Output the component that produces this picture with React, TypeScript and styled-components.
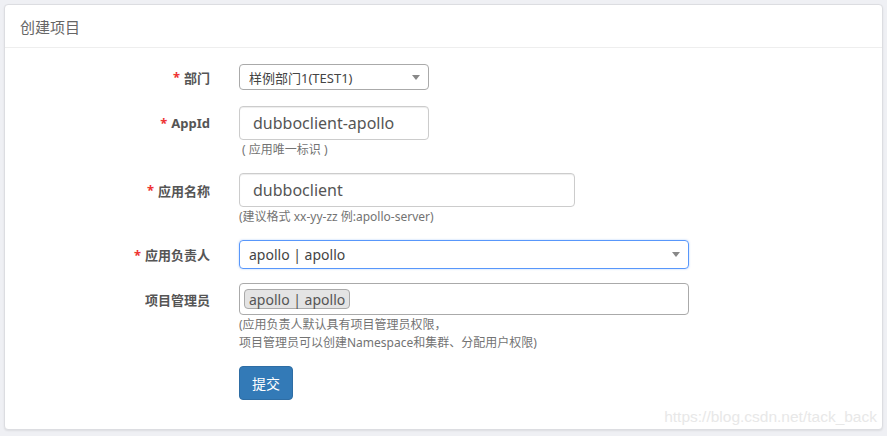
import React from "react";
import styled, { createGlobalStyle } from "styled-components";

const GlobalStyle = createGlobalStyle`
  html, body {
    margin: 0;
    padding: 0;
    background: #eff0f4;
  }
  body {
    font-family: "Noto Sans", "Noto Sans CJK SC", sans-serif;
    color: #333;
  }
`;

const Page = styled.div`
  width: 887px;
  height: 436px;
  padding: 4px 4px 0 4px;
  box-sizing: border-box;
`;

const Panel = styled.div`
  background: #fff;
  border: 1px solid #dcdde1;
  border-radius: 4px;
  box-shadow: 0 1px 2px rgba(0, 0, 0, 0.08);
  height: 426px;
  box-sizing: border-box;
  position: relative;
`;

const PanelHeader = styled.div`
  height: 42px;
  padding: 0 15px;
  display: flex;
  align-items: center;
  border-bottom: 1px solid #eeeeee;
  font-family: "Noto Sans CJK SC", sans-serif;
  font-size: 15px;
  color: #666;
`;

const Form = styled.div`
  padding: 16px 0 0 0;
  display: flex;
  flex-direction: column;
`;

const Row = styled.div<{ $mb: number }>`
  display: flex;
  align-items: flex-start;
  margin-bottom: ${(p) => p.$mb}px;
`;

const Label = styled.div<{ $h: number }>`
  width: 205px;
  height: ${(p) => p.$h}px;
  margin-right: 29px;
  display: flex;
  align-items: center;
  justify-content: flex-end;
  font-family: "Noto Sans", "Noto Sans CJK SC", sans-serif;
  font-weight: 700;
  font-size: 13px;
  color: #555;
`;

const Star = styled.span`
  color: #e33;
  margin-right: 4px;
  font-weight: 700;
`;

const Field = styled.div`
  display: flex;
  flex-direction: column;
`;

const Select = styled.div<{ $w: number; $h: number; $focus?: boolean; $size: number }>`
  width: ${(p) => p.$w}px;
  height: ${(p) => p.$h}px;
  box-sizing: border-box;
  border: 1px solid ${(p) => (p.$focus ? "#5897fb" : "#aaa")};
  border-radius: 4px;
  display: flex;
  align-items: center;
  padding: 0 8px 0 9px;
  font-size: ${(p) => p.$size}px;
  color: #444;
  font-family: "Noto Sans", "Noto Sans CJK SC", sans-serif;
  box-shadow: ${(p) => (p.$focus ? "0 0 2px rgba(88,151,251,0.5)" : "none")};
`;

const SelectText = styled.span`
  flex: 1;
`;

const Arrow = styled.span`
  width: 0;
  height: 0;
  border-left: 4px solid transparent;
  border-right: 4px solid transparent;
  border-top: 5px solid #888;
`;

const Input = styled.div<{ $w: number }>`
  width: ${(p) => p.$w}px;
  height: 34px;
  box-sizing: border-box;
  border: 1px solid #ccc;
  border-radius: 4px;
  box-shadow: inset 0 1px 1px rgba(0, 0, 0, 0.075);
  display: flex;
  align-items: center;
  padding: 0 13px;
  font-size: 16px;
  color: #555;
  font-family: "Noto Sans", sans-serif;
`;

const MultiBox = styled.div`
  width: 450px;
  height: 32px;
  box-sizing: border-box;
  border: 1px solid #aaa;
  border-radius: 4px;
  display: flex;
  align-items: center;
  padding: 0 4px;
`;

const Tag = styled.span`
  background: #e4e4e4;
  border: 1px solid #aaa;
  border-radius: 4px;
  padding: 0 4px;
  height: 20px;
  line-height: 19px;
  box-sizing: border-box;
  font-size: 14px;
  color: #555;
  font-family: "Noto Sans", sans-serif;
`;

const Help = styled.div`
  font-size: 12px;
  color: #737373;
  line-height: 18px;
  margin-top: 1px;
  font-family: "Noto Sans", "Noto Sans CJK SC", sans-serif;
  white-space: pre;
`;

const Button = styled.button`
  width: 54px;
  height: 34px;
  background: #337ab7;
  border: 1px solid #2e6da4;
  border-radius: 4px;
  color: #fff;
  font-size: 14px;
  font-family: "Noto Sans CJK SC", sans-serif;
  padding: 0;
  margin-left: 234px;
`;

const Watermark = styled.div`
  position: absolute;
  right: 5px;
  bottom: 3px;
  font-family: "Liberation Sans", Arial, sans-serif;
  font-size: 15.5px;
  color: #e8e8e8;
`;

export default function App() {
  return (
    <>
      <GlobalStyle />
      <Page>
        <Panel>
          <PanelHeader>创建项目</PanelHeader>
          <Form>
            <Row $mb={16}>
              <Label $h={26}>
                <Star>*</Star>部门
              </Label>
              <Select $w={190} $h={26} $size={13}>
                <SelectText>样例部门1(TEST1)</SelectText>
                <Arrow />
              </Select>
            </Row>
            <Row $mb={14}>
              <Label $h={34}>
                <Star>*</Star>AppId
              </Label>
              <Field>
                <Input $w={190}>dubboclient-apollo</Input>
                <Help>{" ( 应用唯一标识 )"}</Help>
              </Field>
            </Row>
            <Row $mb={14}>
              <Label $h={34}>
                <Star>*</Star>应用名称
              </Label>
              <Field>
                <Input $w={336}>dubboclient</Input>
                <Help>(建议格式 xx-yy-zz 例:apollo-server)</Help>
              </Field>
            </Row>
            <Row $mb={14}>
              <Label $h={29}>
                <Star>*</Star>应用负责人
              </Label>
              <Select $w={450} $h={29} $size={14} $focus>
                <SelectText>apollo | apollo</SelectText>
                <Arrow />
              </Select>
            </Row>
            <Row $mb={14}>
              <Label $h={32}>项目管理员</Label>
              <Field>
                <MultiBox>
                  <Tag>apollo | apollo</Tag>
                </MultiBox>
                <Help>
                  {"(应用负责人默认具有项目管理员权限，\n项目管理员可以创建Namespace和集群、分配用户权限)"}
                </Help>
              </Field>
            </Row>
            <Row $mb={0}>
              <Button>提交</Button>
            </Row>
          </Form>
          <Watermark>https://blog.csdn.net/tack_back</Watermark>
        </Panel>
      </Page>
    </>
  );
}
